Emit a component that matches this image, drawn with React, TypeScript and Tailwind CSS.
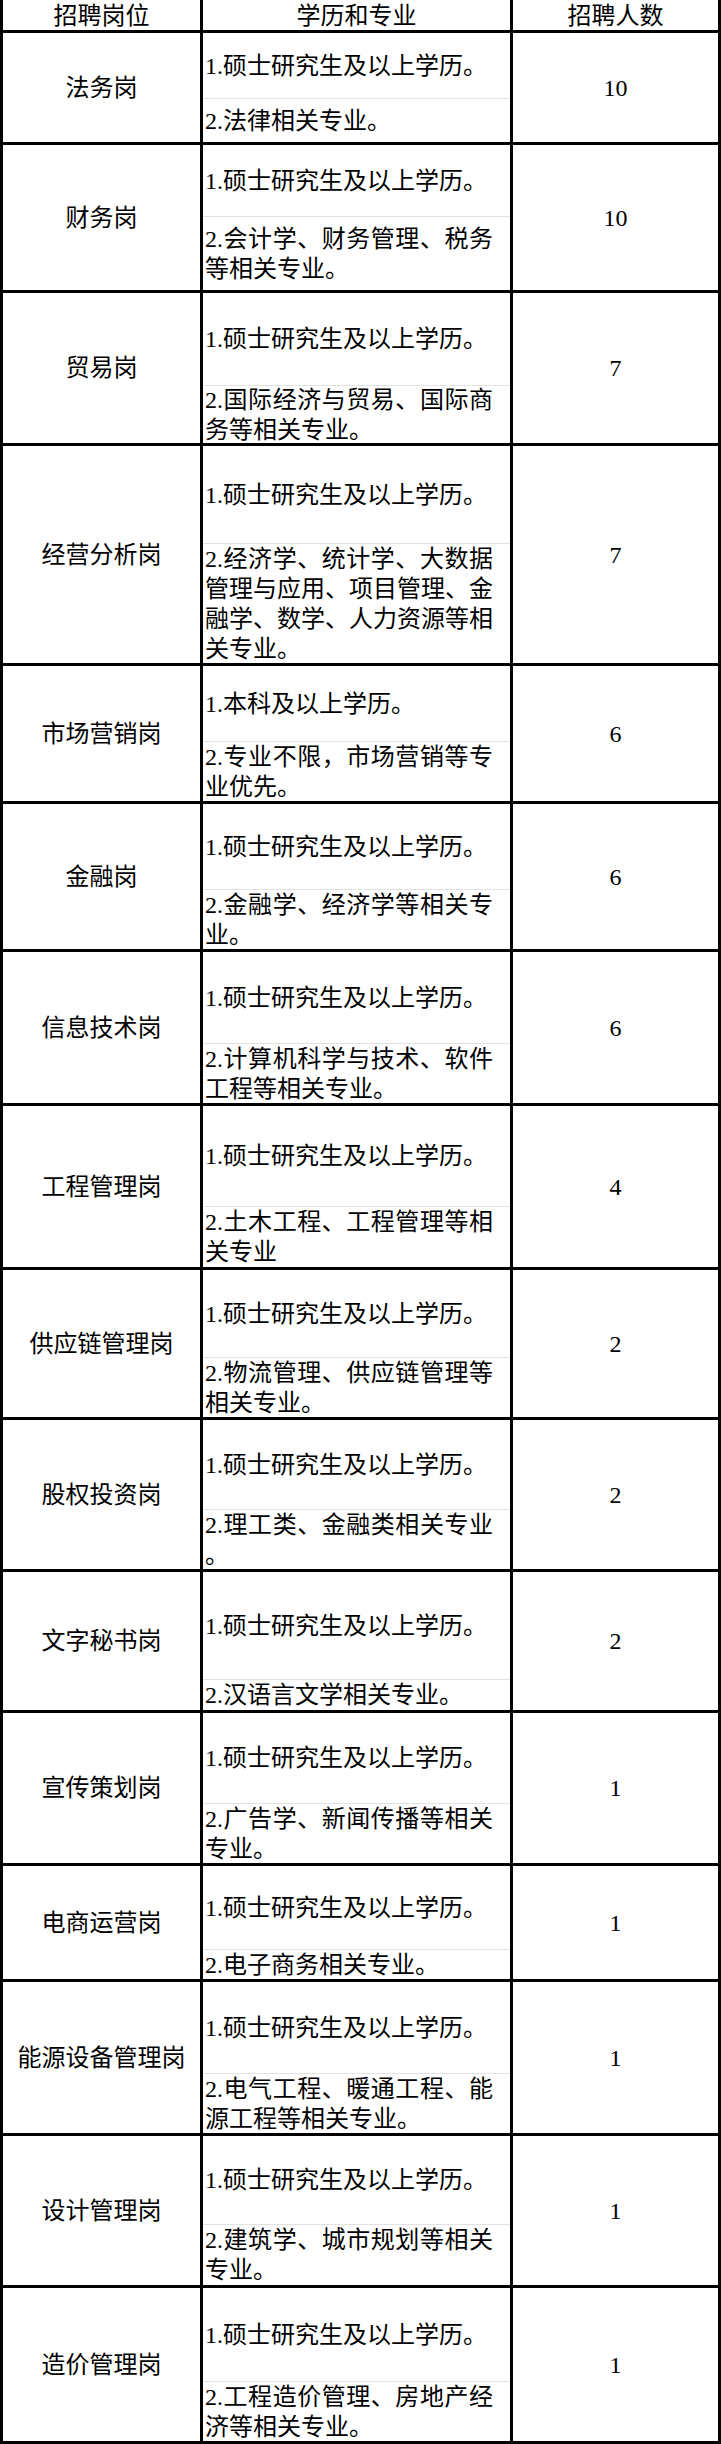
const rows = [
  { name: "法务岗", count: "10", h1: "h-[65px]", h2: "h-[43px]", a: "1.硕士研究生及以上学历。", b: ["2.法律相关专业。"] },
  { name: "财务岗", count: "10", h1: "h-[71px]", h2: "h-[73px]", a: "1.硕士研究生及以上学历。", b: ["2.会计学、财务管理、税务", "等相关专业。"] },
  { name: "贸易岗", count: "7", h1: "h-[92px]", h2: "h-[57px]", a: "1.硕士研究生及以上学历。", b: ["2.国际经济与贸易、国际商", "务等相关专业。"] },
  {
    name: "经营分析岗",
    count: "7",
    h1: "h-[97px]",
    h2: "h-[119px]",
    a: "1.硕士研究生及以上学历。",
    b: ["2.经济学、统计学、大数据", "管理与应用、项目管理、金", "融学、数学、人力资源等相", "关专业。"],
  },
  { name: "市场营销岗", count: "6", h1: "h-[75px]", h2: "h-[59px]", a: "1.本科及以上学历。", b: ["2.专业不限，市场营销等专", "业优先。"] },
  { name: "金融岗", count: "6", h1: "h-[85px]", h2: "h-[59px]", a: "1.硕士研究生及以上学历。", b: ["2.金融学、经济学等相关专", "业。"] },
  { name: "信息技术岗", count: "6", h1: "h-[91px]", h2: "h-[59px]", a: "1.硕士研究生及以上学历。", b: ["2.计算机科学与技术、软件", "工程等相关专业。"] },
  { name: "工程管理岗", count: "4", h1: "h-[100px]", h2: "h-[60px]", a: "1.硕士研究生及以上学历。", b: ["2.土木工程、工程管理等相", "关专业"] },
  { name: "供应链管理岗", count: "2", h1: "h-[87px]", h2: "h-[59px]", a: "1.硕士研究生及以上学历。", b: ["2.物流管理、供应链管理等", "相关专业。"] },
  { name: "股权投资岗", count: "2", h1: "h-[89px]", h2: "h-[59px]", a: "1.硕士研究生及以上学历。", b: ["2.理工类、金融类相关专业", "。"] },
  { name: "文字秘书岗", count: "2", h1: "h-[107px]", h2: "h-[30px]", a: "1.硕士研究生及以上学历。", b: ["2.汉语言文学相关专业。"] },
  { name: "宣传策划岗", count: "1", h1: "h-[90px]", h2: "h-[59px]", a: "1.硕士研究生及以上学历。", b: ["2.广告学、新闻传播等相关", "专业。"] },
  { name: "电商运营岗", count: "1", h1: "h-[83px]", h2: "h-[29px]", a: "1.硕士研究生及以上学历。", b: ["2.电子商务相关专业。"] },
  { name: "能源设备管理岗", count: "1", h1: "h-[91px]", h2: "h-[59px]", a: "1.硕士研究生及以上学历。", b: ["2.电气工程、暖通工程、能", "源工程等相关专业。"] },
  { name: "设计管理岗", count: "1", h1: "h-[88px]", h2: "h-[60px]", a: "1.硕士研究生及以上学历。", b: ["2.建筑学、城市规划等相关", "专业。"] },
  { name: "造价管理岗", count: "1", h1: "h-[93px]", h2: "h-[59px]", a: "1.硕士研究生及以上学历。", b: ["2.工程造价管理、房地产经", "济等相关专业。"] },
];

export default function App() {
  return (
    <div className="w-[721px] bg-white text-black font-['Liberation_Serif','Noto_Sans_CJK_SC',serif] text-[24px] leading-[30px]">
      <div className="border-x-[3px] border-b-[3px] border-black">
        {/* header */}
        <div className="flex h-[30px]">
          <div className="w-[197px] flex items-center justify-center pt-[2px]">招聘岗位</div>
          <div className="w-[310px] border-l-[3px] border-black flex items-center justify-center pt-[2px]">学历和专业</div>
          <div className="flex-1 border-l-[3px] border-black flex items-center justify-center pt-[2px]">招聘人数</div>
        </div>

        {rows.map((r) => (
          <div key={r.name} className="flex border-t-[3px] border-black">
            <div className="w-[197px] flex items-center justify-center whitespace-nowrap">{r.name}</div>
            <div className="w-[310px] border-l-[3px] border-black flex flex-col">
              <div className={`${r.h1} flex items-center pl-[2px] whitespace-nowrap`}>{r.a}</div>
              <div className="h-px bg-[#e2e2e2]" />
              <div className={`${r.h2} flex flex-col justify-center pl-[2px] whitespace-nowrap`}>
                {r.b.map((line, i) =>
                  i < r.b.length - 1 ? (
                    <div key={i} className="w-[288px] text-justify [text-align-last:justify]">
                      {line}
                    </div>
                  ) : (
                    <div key={i}>{line}</div>
                  )
                )}
              </div>
            </div>
            <div className="flex-1 border-l-[3px] border-black flex items-center justify-center">{r.count}</div>
          </div>
        ))}
      </div>
    </div>
  );
}
